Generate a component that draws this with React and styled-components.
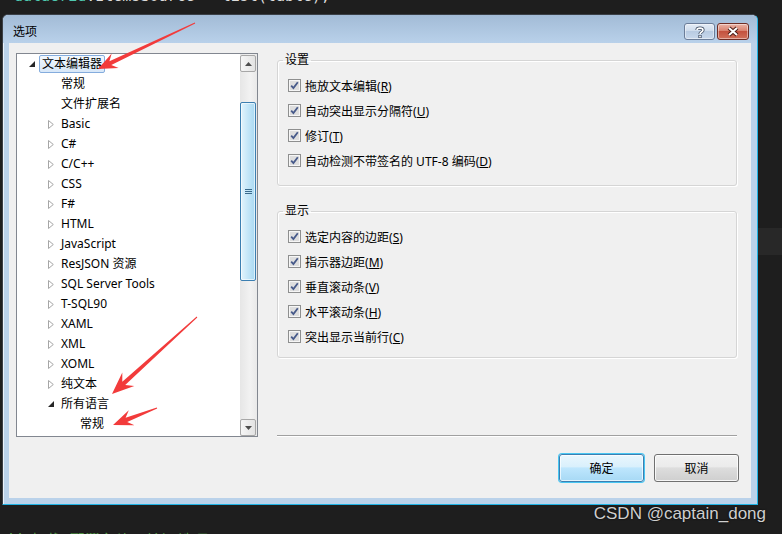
import React from "react";
import styled, { createGlobalStyle } from "styled-components";

const Global = createGlobalStyle`
  html, body { margin: 0; padding: 0; background: #1e1e1e; }
  body { font-family: "Segoe UI", "Noto Sans", "Noto Sans CJK SC", sans-serif; }
`;

const UI = `"Segoe UI", "Noto Sans", "Noto Sans CJK SC", sans-serif`;

const Page = styled.div`
  position: relative;
  width: 782px;
  height: 534px;
  overflow: hidden;
  background: #1e1e1e;
  display: flex;
  flex-direction: column;
`;

const CodeStrip = styled.div`
  height: ${(p) => p.$h}px;
  overflow: hidden;
  flex-shrink: 0;
  font-family: "DejaVu Sans Mono", monospace;
  font-size: 15px;
  line-height: 20px;
  white-space: nowrap;
  color: #dcdcdc;
  padding-left: ${(p) => p.$left}px;
`;

const CodeLine = styled.div`
  margin-top: ${(p) => p.$shift}px;
`;

const Tok = styled.span`
  color: ${(p) => p.$c};
`;

const DialogRow = styled.div`
  display: flex;
  padding-left: 2px;
  flex-shrink: 0;
`;

const Side = styled.div`
  flex: 1;
`;

const SideBand = styled.div`
  margin-top: 214px;
  height: 27px;
  background: #282828;
`;

const Dialog = styled.div`
  width: 756px;
  height: 491px;
  box-sizing: border-box;
  display: flex;
  flex-direction: column;
  background: #bad2ea;
  border: 1px solid #3a3f46;
  border-right-color: #1fb3e4;
  border-bottom-color: #1fb3e4;
  border-radius: 6px 6px 0 0;
  box-shadow: inset 1px 1px 0 rgba(255, 255, 255, 0.7);
`;

const TitleBar = styled.div`
  height: 28px;
  flex-shrink: 0;
  display: flex;
  align-items: flex-start;
  padding: 8px 8px 0 10px;
  box-sizing: border-box;
  background: linear-gradient(#a2bbd6, #b9d1ea);
  border-radius: 5px 5px 0 0;
`;

const Title = styled.div`
  flex: 1;
  margin-top: 1px;
  font-size: 12px;
  line-height: 16px;
  color: #000;
`;

const CaptionButton = styled.div`
  width: ${(p) => p.$w}px;
  height: 17px;
  box-sizing: border-box;
  margin-left: 2px;
  border: 1px solid ${(p) => (p.$close ? "#6e2d25" : "#6b7d99")};
  border-radius: 3px;
  background: ${(p) =>
    p.$close
      ? "linear-gradient(#eab3a6 0%, #d9826f 45%, #c4523f 50%, #d0705a 100%)"
      : "linear-gradient(#e4ecf6 0%, #cfdcec 45%, #b8cbe2 50%, #c8d8ec 100%)"};
  box-shadow: inset 0 0 0 1px rgba(255, 255, 255, 0.45);
  display: flex;
  align-items: center;
  justify-content: center;
`;

const Client = styled.div`
  flex: 1;
  margin: 0 6px 6px 6px;
  background: #f0f0f0;
  display: grid;
  grid-template-columns: 242px 1fr;
  column-gap: 19px;
  padding: 10px 12px 16px 7px;
  box-sizing: border-box;
`;

const TreeBox = styled.div`
  height: 384px;
  box-sizing: border-box;
  border: 1px solid #828790;
  background: #fff;
  display: flex;
`;

const TreeList = styled.div`
  flex: 1;
  overflow: hidden;
`;

const TreeRow = styled.div`
  height: 20px;
  display: flex;
  align-items: center;
  padding-left: ${(p) => 10 + p.$level * 19}px;
  font-family: ${UI};
  font-size: 12px;
  color: #000;
  white-space: nowrap;
`;

const Expander = styled.div`
  width: 12px;
  flex-shrink: 0;
  display: flex;
  align-items: center;
  padding-left: 2px;
  box-sizing: border-box;
`;

const TreeLabel = styled.span`
  line-height: 16px;
  padding: 0 2px;
  border: 1px solid ${(p) => (p.$selected ? "#84acdd" : "transparent")};
  border-radius: 2px;
  background: ${(p) =>
    p.$selected ? "linear-gradient(#f2f8fe, #d7e7f8)" : "transparent"};
`;

const ScrollBar = styled.div`
  width: 17px;
  flex-shrink: 0;
  display: flex;
  flex-direction: column;
  background: linear-gradient(90deg, #e6e6e6, #f2f2f2 60%, #e9e9e9);
`;

const ScrollButton = styled.div`
  height: 17px;
  margin: 1px 1px 0 0;
  box-sizing: border-box;
  border: 1px solid #a7a7a7;
  border-radius: 2px;
  background: linear-gradient(90deg, #f6f6f6, #e3e3e3);
  display: flex;
  align-items: center;
  justify-content: center;
`;

const Track = styled.div`
  flex: 1;
  padding-right: 1px;
`;

const Thumb = styled.div`
  margin-top: 30px;
  height: 179px;
  box-sizing: border-box;
  border: 1px solid #3c7fb1;
  border-radius: 2px;
  background: linear-gradient(90deg, #e3f4fc, #c4e6f8 50%, #a9d9f2);
  box-shadow: inset 0 0 0 1px rgba(255, 255, 255, 0.6);
  display: flex;
  align-items: center;
  justify-content: center;
`;

const RightColumn = styled.div`
  display: flex;
  flex-direction: column;
`;

const Group = styled.fieldset`
  margin: ${(p) => p.$top}px 2px 0 0;
  padding: 6px 10px ${(p) => p.$bottom}px 10px;
  border: 1px solid #d5d5d5;
  border-radius: 3px;
  box-shadow: inset 1px 1px 0 #fff, 1px 1px 0 #fff;
  min-width: 0;
`;

const GroupTitle = styled.legend`
  margin-left: -5px;
  padding: 0 2px;
  font-family: ${UI};
  font-size: 12px;
  line-height: 14px;
  color: #000;
`;

const CheckRow = styled.label`
  height: 25px;
  display: flex;
  align-items: center;
  gap: 4px;
  font-family: ${UI};
  font-size: 12px;
  color: #000;
  white-space: nowrap;
`;

const Key = styled.span`
  text-decoration: underline;
  text-underline-offset: 1px;
`;

const Spacer = styled.div`
  flex: 1;
`;

const Separator = styled.div`
  margin-right: 2px;
  border-top: 1px solid #a0a0a0;
  border-bottom: 1px solid #fff;
`;

const ButtonBar = styled.div`
  margin-top: 17px;
  display: flex;
  justify-content: flex-end;
  gap: 10px;
`;

const Button = styled.div`
  width: 85px;
  height: 28px;
  box-sizing: border-box;
  border: 1px solid ${(p) => (p.$primary ? "#3c7fb1" : "#707070")};
  border-radius: 3px;
  background: ${(p) =>
    p.$primary
      ? "linear-gradient(#eaf6fd 0%, #d9f0fc 45%, #bee6fd 50%, #a7d9f5 100%)"
      : "linear-gradient(#f2f2f2 0%, #ebebeb 45%, #dddddd 50%, #cfcfcf 100%)"};
  box-shadow: ${(p) =>
    p.$primary
      ? "0 0 0 1px #48c6f2, inset 0 0 0 1px rgba(255,255,255,0.7)"
      : "inset 0 0 0 1px rgba(255,255,255,0.8)"};
  display: flex;
  align-items: center;
  justify-content: center;
  font-family: ${UI};
  font-size: 12px;
  color: #000;
`;

const Footer = styled.div`
  display: flex;
  justify-content: flex-end;
  padding-right: 16px;
  font-family: "Liberation Sans", Arial, sans-serif;
  font-size: 17px;
  line-height: 17px;
  color: #cfcfcf;
  text-shadow: 0 0 2px #000;
  flex-shrink: 0;
`;

const Overlay = styled.svg`
  position: absolute;
  left: 0;
  top: 0;
  pointer-events: none;
`;

const treeItems = [
  { label: "文本编辑器", level: 0, exp: "open", selected: true },
  { label: "常规", level: 1 },
  { label: "文件扩展名", level: 1 },
  ...[
    "Basic",
    "C#",
    "C/C++",
    "CSS",
    "F#",
    "HTML",
    "JavaScript",
    "ResJSON 资源",
    "SQL Server Tools",
    "T-SQL90",
    "XAML",
    "XML",
    "XOML",
    "纯文本",
  ].map((label) => ({ label, level: 1, exp: "closed" })),
  { label: "所有语言", level: 1, exp: "open" },
  { label: "常规", level: 2 },
];

const settings = [
  ["拖放文本编辑", "R"],
  ["自动突出显示分隔符", "U"],
  ["修订", "T"],
  ["自动检测不带签名的 UTF-8 编码", "D"],
];

const display = [
  ["选定内容的边距", "S"],
  ["指示器边距", "M"],
  ["垂直滚动条", "V"],
  ["水平滚动条", "H"],
  ["突出显示当前行", "C"],
];

const arrows = [
  { tail: [195, 23], tip: [98, 69], head: 19, hw: 8 },
  { tail: [197, 317], tip: [112, 394], head: 22, hw: 9 },
  { tail: [157, 408], tip: [113, 425], head: 20, hw: 8 },
];

function arrowPoints({ tail, tip, head, hw }) {
  const [x1, y1] = tail;
  const [x2, y2] = tip;
  const L = Math.hypot(x2 - x1, y2 - y1);
  const ux = (x2 - x1) / L;
  const uy = (y2 - y1) / L;
  const nx = -uy;
  const ny = ux;
  const bx = x2 - ux * head;
  const by = y2 - uy * head;
  const jx = x2 - ux * head * 0.72;
  const jy = y2 - uy * head * 0.72;
  const sw = 2.2;
  const pts = [
    [x1 + nx * 0.5, y1 + ny * 0.5],
    [jx + nx * sw, jy + ny * sw],
    [bx + nx * hw, by + ny * hw],
    [x2, y2],
    [bx - nx * hw, by - ny * hw],
    [jx - nx * sw, jy - ny * sw],
    [x1 - nx * 0.5, y1 - ny * 0.5],
  ];
  return pts.map((p) => p.map((v) => v.toFixed(1)).join(",")).join(" ");
}

function ExpandIcon({ open }) {
  return open ? (
    <svg width="6" height="6" viewBox="0 0 6 6">
      <polygon points="6,0 6,6 0,6" fill="#262626" />
    </svg>
  ) : (
    <svg width="6" height="9" viewBox="0 0 6 9">
      <polygon points="0.5,0.5 5.3,4.5 0.5,8.5" fill="#fff" stroke="#a6a6a6" />
    </svg>
  );
}

function CheckBox() {
  return (
    <svg width="13" height="13" viewBox="0 0 13 13">
      <rect x="0.5" y="0.5" width="12" height="12" fill="#f6f6f6" stroke="#8e8f8f" />
      <rect x="2" y="2" width="9" height="9" fill="#dedede" />
      <path d="M3.2 6.6 L5.4 9 L9.8 3.2" fill="none" stroke="#475a8a" strokeWidth="1.8" />
    </svg>
  );
}

function Check({ text, k }) {
  return (
    <CheckRow>
      <CheckBox />
      <span>
        {text}(<Key>{k}</Key>)
      </span>
    </CheckRow>
  );
}

export default function App() {
  return (
    <Page>
      <Global />
      <CodeStrip $h={14} $left={14}>
        <CodeLine $shift={-14}>
          <Tok $c="#4ec9b0">dataGrid</Tok>
          <Tok $c="#dcdcdc">.ItemsSource = list(table);</Tok>
        </CodeLine>
      </CodeStrip>

      <DialogRow>
        <Dialog>
          <TitleBar>
            <Title>选项</Title>
            <CaptionButton $w={31}>
              <svg width="10" height="12" viewBox="0 0 10 12">
                <path
                  d="M2 4 C2 1.5 8 1.5 8 4 C8 6 5 6 5 8"
                  fill="none"
                  stroke="#3c4a60"
                  strokeWidth="3.2"
                />
                <path
                  d="M2 4 C2 1.5 8 1.5 8 4 C8 6 5 6 5 8"
                  fill="none"
                  stroke="#fff"
                  strokeWidth="1.6"
                />
                <rect x="3.4" y="9" width="3.2" height="3" fill="#3c4a60" />
                <rect x="4.2" y="9.6" width="1.6" height="1.8" fill="#fff" />
              </svg>
            </CaptionButton>
            <CaptionButton $w={32} $close>
              <svg width="14" height="11" viewBox="0 0 14 11">
                <path d="M3 2 L11 9 M11 2 L3 9" stroke="#4a1c16" strokeWidth="4" />
                <path d="M3 2 L11 9 M11 2 L3 9" stroke="#fff" strokeWidth="2" />
              </svg>
            </CaptionButton>
          </TitleBar>

          <Client>
            <TreeBox>
              <TreeList>
                {treeItems.map((item, i) => (
                  <TreeRow key={i} $level={item.level}>
                    <Expander>
                      {item.exp && <ExpandIcon open={item.exp === "open"} />}
                    </Expander>
                    <TreeLabel $selected={item.selected}>{item.label}</TreeLabel>
                  </TreeRow>
                ))}
              </TreeList>
              <ScrollBar>
                <ScrollButton>
                  <svg width="7" height="4" viewBox="0 0 7 4">
                    <polygon points="3.5,0 7,4 0,4" fill="#4d4d4d" />
                  </svg>
                </ScrollButton>
                <Track>
                  <Thumb>
                    <svg width="7" height="7" viewBox="0 0 7 7">
                      <path d="M0 1.5 H7 M0 3.5 H7 M0 5.5 H7" stroke="#3a6a8c" strokeWidth="1" />
                    </svg>
                  </Thumb>
                </Track>
                <ScrollButton>
                  <svg width="7" height="4" viewBox="0 0 7 4">
                    <polygon points="0,0 7,0 3.5,4" fill="#4d4d4d" />
                  </svg>
                </ScrollButton>
              </ScrollBar>
            </TreeBox>

            <RightColumn>
              <Group $top={0} $bottom={12}>
                <GroupTitle>设置</GroupTitle>
                {settings.map(([t, k]) => (
                  <Check key={k} text={t} k={k} />
                ))}
              </Group>
              <Group $top={18} $bottom={8}>
                <GroupTitle>显示</GroupTitle>
                {display.map(([t, k]) => (
                  <Check key={k} text={t} k={k} />
                ))}
              </Group>
              <Spacer />
              <Separator />
              <ButtonBar>
                <Button $primary>确定</Button>
                <Button>取消</Button>
              </ButtonBar>
            </RightColumn>
          </Client>
        </Dialog>
        <Side>
          <SideBand />
        </Side>
      </DialogRow>

      <Footer>CSDN @captain_dong</Footer>

      <CodeStrip $h={20} $left={4}>
        <CodeLine $shift={8}>
          <Tok $c="#57a64a">// 加载 配置文件 默认 选项</Tok>
        </CodeLine>
      </CodeStrip>

      <Overlay width="782" height="534" viewBox="0 0 782 534">
        {arrows.map((a, i) => (
          <polygon key={i} points={arrowPoints(a)} fill="#f23b3b" />
        ))}
      </Overlay>
    </Page>
  );
}
